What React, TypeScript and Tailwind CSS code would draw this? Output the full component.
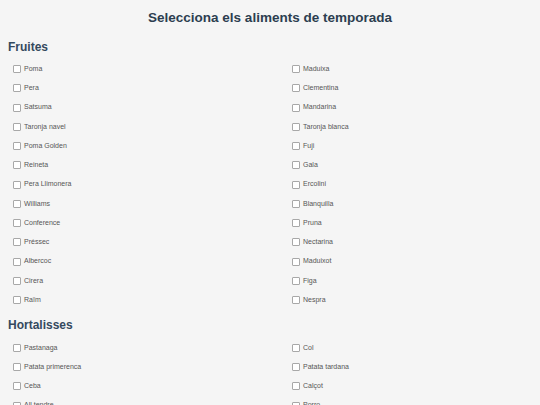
const fruites = [
  "Poma", "Maduixa",
  "Pera", "Clementina",
  "Satsuma", "Mandarina",
  "Taronja navel", "Taronja blanca",
  "Poma Golden", "Fuji",
  "Reineta", "Gala",
  "Pera Llimonera", "Ercolini",
  "Williams", "Blanquilla",
  "Conference", "Pruna",
  "Préssec", "Nectarina",
  "Albercoc", "Maduixot",
  "Cirera", "Figa",
  "Raïm", "Nespra",
];

const hortalisses = [
  "Pastanaga", "Col",
  "Patata primerenca", "Patata tardana",
  "Ceba", "Calçot",
  "All tendre", "Porro",
  "Bleda", "Espinac",
  "Carxofa", "Bròquil",
];

function Item({ name }: { name: string }) {
  return (
    <label className="flex h-[19.25px] items-center gap-[3px] pl-[5px] text-[7px] text-[#555]">
      <span className="block h-[8px] w-[8px] rounded-[1px] border border-[#a8a8a8] bg-white" />
      <span>{name}</span>
    </label>
  );
}

function Section({ title, items, className }: { title: string; items: string[]; className?: string }) {
  return (
    <section className={className}>
      <h2 className="text-[12px] font-bold leading-[14px] text-[#34495e]">{title}</h2>
      <div className="mt-[6px] grid grid-cols-2 gap-x-[34px]">
        {items.map((it) => (
          <Item key={it} name={it} />
        ))}
      </div>
    </section>
  );
}

export default function App() {
  return (
    <div className="h-[405px] overflow-hidden bg-[#f5f5f5] px-2 font-['Liberation_Sans',Arial,sans-serif]">
      <h1 className="pt-[9px] text-center text-[13.5px] font-bold leading-[18px] text-[#2c3e50]">
        Selecciona els aliments de temporada
      </h1>
      <Section title="Fruites" items={fruites} className="mt-[12.5px]" />
      <Section title="Hortalisses" items={hortalisses} className="mt-[8.5px]" />
    </div>
  );
}
